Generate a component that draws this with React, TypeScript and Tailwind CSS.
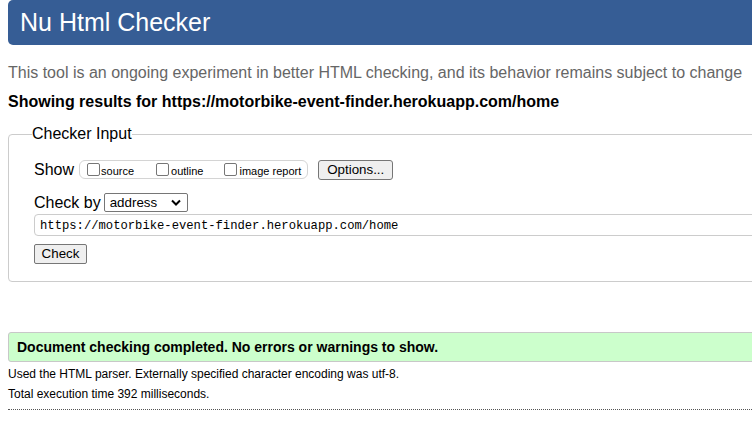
export default function App() {
  const url = 'https://motorbike-event-finder.herokuapp.com/home'

  return (
    <div className="w-[752px] h-[438px] overflow-hidden bg-white font-['Liberation_Sans',Arial,sans-serif] text-black">
      <div className="w-[1000px] pl-2">
        {/* Title bar */}
        <h1 className="h-[45px] flex items-center pl-3 bg-[#365d95] rounded-[5px] text-white text-[25px] leading-none font-normal">
          Nu Html Checker
        </h1>

        <p className="mt-[19px] text-[16px] leading-[18px] text-[#666]">
          This tool is an ongoing experiment in better HTML checking, and its behavior remains subject to change
        </p>
        <p className="mt-[11px] text-[16px] leading-[18px] font-bold">Showing results for {url}</p>

        {/* Checker input */}
        <fieldset className="mt-[14px] w-[900px] border border-[#ccc] rounded-[4px] pl-[25px] pt-[16px] pb-[16px]">
          <legend className="ml-[-2px] text-[16px] leading-[18px]">Checker Input</legend>

          <div className="flex items-center h-[21px]">
            <span className="text-[16px] leading-none">Show</span>
            <div className="ml-[5px] flex items-center h-[19px] border border-[#d4d4d4] rounded-[6px] pl-[7px] pr-[6px] text-[11px]">
              <input type="checkbox" className="appearance-none m-0 w-[13px] h-[13px] border border-[#767676] rounded-[2px] bg-white" />
              <span className="ml-px pt-[3px] leading-none">source</span>
              <input type="checkbox" className="appearance-none m-0 ml-[22px] w-[13px] h-[13px] border border-[#767676] rounded-[2px] bg-white" />
              <span className="ml-[2px] pt-[3px] leading-none">outline</span>
              <input type="checkbox" className="appearance-none m-0 ml-[21px] w-[13px] h-[13px] border border-[#767676] rounded-[2px] bg-white" />
              <span className="ml-[2px] pt-[3px] leading-none">image report</span>
            </div>
            <button className="ml-[10px] w-[75px] h-[20px] bg-[#efefef] border border-[#767676] rounded-[3px] text-[13.33px] leading-none">
              Options...
            </button>
          </div>

          <div className="mt-[13px] flex items-center h-[19px]">
            <span className="text-[16px] leading-none">Check by</span>
            <div className="ml-[3px] w-[84px] h-[19px] flex items-center justify-between border border-[#767676] rounded-[2px] pl-[5px] pr-[6px] text-[13.33px]">
              <span>address</span>
              <svg width="10" height="7" viewBox="0 0 10 7" fill="none" stroke="#000" strokeWidth="2">
                <path d="M1 1.5 5 5.5 9 1.5" />
              </svg>
            </div>
          </div>

          <div className="mt-[2px] h-[22px] flex items-center border border-[#ccc] rounded-[4px] pl-[5px] pt-[3px] font-['Liberation_Mono',monospace] text-[12.2px]">
            {url}
          </div>

          <button className="mt-[8px] w-[53px] h-[20px] bg-[#efefef] border border-[#767676] rounded-[2px] text-[13.33px] leading-none">
            Check
          </button>
        </fieldset>

        {/* Result */}
        <div className="mt-[50px] w-[900px] h-[30px] flex items-center pl-2 bg-[#ccffcc] border border-[#c8c8c8] rounded-[3px] text-[14px] font-bold">
          Document checking completed. No errors or warnings to show.
        </div>
        <p className="mt-[3px] text-[12px] leading-[19px]">
          Used the HTML parser. Externally specified character encoding was utf-8.
        </p>
        <p className="mt-px text-[12px] leading-[19px]">Total execution time 392 milliseconds.</p>
        <div className="mt-[5px] w-[900px] border-t border-dotted border-[#555]" />
      </div>
    </div>
  )
}
